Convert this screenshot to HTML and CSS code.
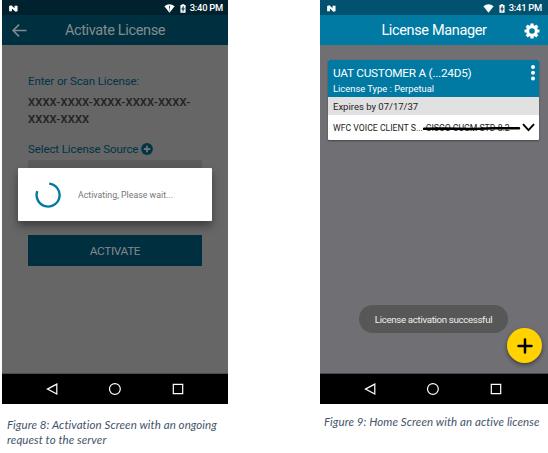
FILE: index.html
```html
<!DOCTYPE html>
<html lang="en">
<head>
<meta charset="utf-8">
<title>License activation</title>
<link rel="stylesheet" href="styles.css">
</head>
<body>
<svg class="defs" aria-hidden="true">
  <symbol id="n-logo" viewBox="0 0 10 8"><path d="M0 7.2V1l2.6-.8 3.6 3.6V.8H9.6V7L7.2 7.8 3.2 4V7.2Z"/></symbol>
  <symbol id="wifi" viewBox="0 0 12 10"><path d="M.3 2.5Q6-1.8 11.7 2.5L6 9.6Z"/></symbol>
  <symbol id="battery" viewBox="0 0 7 10"><path d="M2 0h3v1h1.5v9h-6V1H2Z"/><path class="bolt" d="M4 2.2 1.8 5.8h1.4v2.8L5.3 5H4Z"/></symbol>
  <symbol id="nav" viewBox="0 0 228 30"><path d="M54.8 10.1v10L45.4 15.1Z"/><circle cx="112.9" cy="15" r="5.4"/><path d="M171.3 10.3h9.4v9.4h-9.4Z"/></symbol>
</svg>
<main class="page">
  <figure class="figure">
    <section class="phone phone-dim">
      <header class="status"><svg class="n-logo"><use href="#n-logo"/></svg><svg class="wifi" viewBox="0 0 12 10"><use href="#wifi"/><path class="bolt" d="M6 2v3.2M6 6.3v1"/></svg><svg class="battery"><use href="#battery"/></svg><span class="time">3:40 PM</span></header>
      <div class="appbar">
        <svg class="back" viewBox="0 0 16 14"><path d="M15.5 7H1M7.5.8 1.2 7l6.3 6.2"/></svg>
        <h1 class="title">Activate License</h1>
      </div>
      <div class="form">
        <div class="label enter">Enter or Scan License:</div>
        <div class="key">XXXX-XXXX-XXXX-XXXX-XXXX-<br>XXXX-XXXX</div>
        <div class="label source"><span>Select License Source</span><svg class="add" viewBox="0 0 12 12"><circle cx="6" cy="6" r="5.9"/><path d="M6 2.8v6.4M2.8 6h6.4"/></svg></div>
        <div class="select"></div>
        <div class="activate"><span>ACTIVATE</span></div>
      </div>
      <svg class="nav"><use href="#nav"/></svg>
      <div class="dialog">
        <svg class="spinner" viewBox="0 0 26 26"><path d="M14.2 1.6A11.5 11.5 0 1 1 2.3 9.1"/></svg>
        <span class="wait">Activating, Please wait...</span>
      </div>
    </section>
    <figcaption class="caption cap-left">Figure 8: Activation Screen with an ongoing<br>request to the server</figcaption>
  </figure>
  <figure class="figure">
    <section class="phone phone-home">
      <header class="status"><svg class="n-logo"><use href="#n-logo"/></svg><svg class="wifi"><use href="#wifi"/></svg><svg class="battery"><use href="#battery"/></svg><span class="time">3:41 PM</span></header>
      <div class="appbar">
        <h1 class="title">License Manager</h1>
        <svg class="gear" viewBox="0 0 16 16"><path class="teeth" d="M8 .5v15M.5 8h15M2.7 2.7l10.6 10.6M13.3 2.7 2.7 13.3"/><circle class="ring" cx="8" cy="8" r="4.6"/><circle class="hole" cx="8" cy="8" r="2.8"/></svg>
      </div>
      <div class="home">
        <article class="card">
          <div class="card-head">
            <div><div class="customer">UAT CUSTOMER A (...24D5)</div><div class="type">License Type : Perpetual</div></div>
            <svg class="more" viewBox="0 0 4 16"><circle cx="2" cy="2" r="2"/><circle cx="2" cy="7.8" r="2"/><circle cx="2" cy="13.6" r="2"/></svg>
          </div>
          <div class="expires"><span>Expires by 07/17/37</span></div>
          <div class="item"><span class="product">WFC VOICE CLIENT S...</span><span class="struck">CISCO CUCM STD 8.2<svg class="marker" viewBox="0 0 98 5"><path d="M1 2.8 20 2.4 50 2.9 70 2.2 96 2.3"/></svg></span><svg class="chevron" viewBox="0 0 13 9"><path d="M1 1.2l5.5 6L12 1.2"/></svg></div>
        </article>
      </div>
      <svg class="nav"><use href="#nav"/></svg>
      <div class="toast"><span>License activation successful</span></div>
      <div class="fab"><svg viewBox="0 0 16 16"><path d="M8 1.5v13M1.5 8h13"/></svg></div>
    </section>
    <figcaption class="caption cap-right">Figure 9: Home Screen with an active license</figcaption>
  </figure>
</main>
</body>
</html>
```
FILE: styles.css
```css
* { box-sizing: border-box; }
body { margin: 0; background: #fff; font-family: Roboto, sans-serif; overflow: hidden; }
svg { display: block; flex: none; }
.defs { position: absolute; width: 0; height: 0; }
.page { display: flex; gap: 92px; padding-left: 2px; width: 548px; height: 453px; }
.figure { margin: 0; width: 226px; flex: none; white-space: nowrap; }
.figure + .figure { width: 228px; }
.phone { position: relative; display: flex; flex-direction: column; height: 404px; overflow: hidden; }
.status { display: flex; align-items: center; height: 15px; padding: 1px 5px 0 7px; color: #fff; font-size: 9.4px; font-weight: 500; line-height: 14px; letter-spacing: -.25px; }
.n-logo { width: 9px; height: 7px; fill: #fff; margin-right: auto; }
.wifi { width: 11px; height: 9px; fill: #fff; margin-right: 5px; }
.battery { width: 6px; height: 9px; fill: #fff; margin-right: 4px; }
.bolt { fill: #174550; stroke: #174550; stroke-width: .5; }
.wifi .bolt { stroke-width: 1; }
.appbar { position: relative; height: 30px; display: flex; align-items: center; justify-content: center; }
.title { margin: 0; font-size: 14.5px; font-weight: 400; line-height: 30px; padding-top: 2px; letter-spacing: -.36px; }
.back { position: absolute; left: 10px; top: 8px; width: 15px; height: 15px; fill: none; stroke: #83888a; stroke-width: 1.8; }
.phone-dim { background: #666; }
.phone-dim .status { background: #00222e; }
.phone-dim .appbar { background: #003040; color: #858b8d; }
.form { flex: 1; padding: 28px 26px 0; }
.label { height: 17px; line-height: 18px; font-size: 11.5px; letter-spacing: -.1px; color: #003448; }
.enter { line-height: 16px; }
.key { margin-top: 4px; height: 34px; line-height: 17px; font-size: 11.2px; font-weight: 600; letter-spacing: .12px; color: #242424; }
.source { display: flex; align-items: center; margin-top: 12px; gap: 3px; }
.add { width: 12px; height: 12px; fill: #003448; }
.add path { stroke: #737373; stroke-width: 1.8; }
.select { margin-top: 3px; height: 30px; background: #5b5b5b; }
.activate { margin: 45px 0 0; height: 31px; background: #003040; color: #83888a; font-size: 11.8px; letter-spacing: -.35px; line-height: 32px; text-align: center; }
.nav { width: 228px; height: 31px; background: #000; border-top: 1px solid #4b4b4d; fill: none; stroke: #fff; stroke-width: 1.2; }
.dialog { position: absolute; left: 16px; top: 168px; width: 194px; height: 53px; background: #fff; border-radius: 1px; box-shadow: 0 5px 9px rgba(0,0,0,.4); display: flex; align-items: center; padding-left: 17px; gap: 17px; }
.spinner { width: 26px; height: 26px; fill: none; stroke: #0079a3; stroke-width: 2.4; }
.wait { font-size: 8.8px; color: #777; }
.caption { font-family: Lato, sans-serif; font-style: italic; font-size: 11.5px; line-height: 15px; letter-spacing: .08px; color: #44546a; }
.cap-left { padding: 13px 0 0 5px; }
.cap-right { padding: 10px 0 0 4px; }
.phone-home { background: #706f74; }
.phone-home .status { background: #00526e; padding-right: 6px; }
.phone-home .appbar { background: #0079a3; color: #fff; }
.gear { position: absolute; left: 204px; top: 8px; width: 16px; height: 16px; fill: none; stroke: #fff; }
.teeth { stroke-width: 3.2; }
.ring { stroke-width: 2.6; }
.hole { fill: #0079a3; stroke: none; }
.home { flex: 1; padding: 15px 9px 0 8px; }
.card { background: #fff; height: 80px; border-radius: 1px; box-shadow: 0 1px 2px rgba(0,0,0,.4); overflow: hidden; }
.card-head { display: flex; justify-content: space-between; height: 37px; padding: 5px 4px 0 5px; background: #0079a3; color: #fff; }
.customer { font-size: 11.8px; line-height: 17px; letter-spacing: -.25px; }
.type { font-size: 9.4px; line-height: 13px; }
.more { width: 4px; height: 16px; fill: #fff; }
.expires { background: #e1e1e1; height: 18px; line-height: 19px; padding-left: 5px; font-size: 9.5px; color: #222; }
.item { display: flex; align-items: center; height: 25px; padding: 0 4px 0 5px; font-size: 8.7px; color: #222; }
.struck { position: relative; margin-left: 3px; }
.marker { position: absolute; left: -3px; top: 3px; width: 98px; height: 5px; fill: none; stroke: #000; stroke-width: 2.5; stroke-linecap: round; }
.chevron { width: 13px; height: 9px; margin-left: auto; fill: none; stroke: #000; stroke-width: 1.9; }
.toast { position: absolute; left: 39px; top: 305px; width: 149px; height: 28px; border-radius: 14px; background: #575757; color: #eee; font-size: 9.7px; letter-spacing: -.33px; line-height: 29px; text-align: center; }
.fab { position: absolute; left: 187px; top: 328px; width: 35px; height: 35px; border-radius: 50%; background: #ffd200; box-shadow: 0 2px 4px rgba(0,0,0,.45); display: flex; align-items: center; justify-content: center; }
.fab svg { width: 16px; height: 16px; fill: none; stroke: #000; stroke-width: 2.5; stroke-linecap: round; }
```
